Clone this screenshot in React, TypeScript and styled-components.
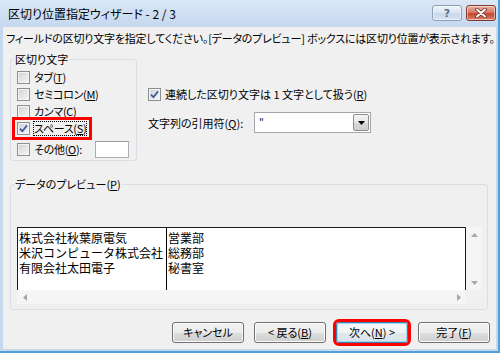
import { FunctionComponent, ReactNode } from 'react';
import styled, { createGlobalStyle } from 'styled-components';

const GlobalStyle = createGlobalStyle`
    html, body {
        margin: 0;
        padding: 0;
        background: #ffffff;
    }
`;

const uiFont = `"Noto Sans CJK JP", "Noto Sans", sans-serif`;

const Window = styled.div`
    width: 500px;
    height: 353px;
    box-sizing: border-box;
    display: flex;
    flex-direction: column;
    background: linear-gradient(#dae7f6, #c5d8ee 27px, #c5d8ee);
    border-right: 2px solid #4fa1da;
    border-bottom: 2px solid #4fa1da;
    font-family: ${uiFont};
    font-size: 11px;
    font-feature-settings: "palt";
    color: #000;
    overflow: hidden;
`;

const TitleBar = styled.div`
    height: 27px;
    flex: none;
    display: flex;
    align-items: flex-start;
    padding-left: 8px;
`;

const Title = styled.div`
    flex: 1;
    line-height: 27px;
    font-size: 12px;
    white-space: nowrap;
`;

const CaptionButtons = styled.div`
    display: flex;
    gap: 4px;
    margin: 5px 2px 0 0;
`;

const CaptionButton = styled.div<{ $close?: boolean }>`
    width: 30px;
    height: 16px;
    box-sizing: border-box;
    border-radius: 3px;
    display: flex;
    align-items: center;
    justify-content: center;
    border: 1px solid ${p => (p.$close ? '#80392c' : '#8aa0ba')};
    background: ${p =>
        p.$close
            ? 'linear-gradient(#eab0a2, #d67b69 45%, #c5452f 55%, #d9826e)'
            : 'linear-gradient(#eef3fa, #dbe6f3 45%, #c9d8ea 55%, #d6e3f1)'};
    box-shadow: inset 0 0 0 1px rgba(255, 255, 255, 0.5);
    color: #5d6f86;
    font-family: "DejaVu Sans", sans-serif;
    font-weight: bold;
    font-size: 11px;
`;

const Client = styled.div`
    flex: 1;
    margin: 0 2px 2px 3px;
    background: #f0f0f0;
    display: flex;
    flex-direction: column;
`;

const Instruction = styled.div`
    margin: 4px 0 0 3px;
    line-height: 14px;
    white-space: nowrap;
    letter-spacing: -0.2px;
`;

const TopRow = styled.div`
    display: flex;
    margin: 7px 0 0 7px;
`;

const Group = styled.fieldset<{ $width?: number }>`
    margin: 0;
    padding: 0;
    min-width: 0;
    border: 1px solid #d5dfe5;
    border-radius: 3px;
    ${p => (p.$width ? `width: ${p.$width}px;` : '')}
    box-sizing: border-box;
`;

const Legend = styled.legend`
    margin-left: 3px;
    padding: 0 1px;
    line-height: 14px;
    white-space: nowrap;
`;

const DelimiterList = styled.div`
    display: flex;
    flex-direction: column;
    padding: 3px 7px 2px 6px;
    letter-spacing: -0.3px;
`;

const Row = styled.div<{ $highlight?: boolean; $gapTop?: number }>`
    display: flex;
    align-items: center;
    height: 17px;
    white-space: nowrap;
    margin-top: ${p => p.$gapTop ?? 0}px;
    ${p =>
        p.$highlight
            ? `
        width: fit-content;
        margin-left: -2px;
        padding: 0 2px;
        outline: 3px solid #ff0000;
    `
            : ''}
`;

const Box = styled.span`
    width: 13px;
    height: 13px;
    box-sizing: border-box;
    flex: none;
    border: 1px solid #8e8f8f;
    background: linear-gradient(135deg, #cdd1d6, #f7f7f7);
    box-shadow: inset 0 0 0 1px #f4f4f4;
    display: flex;
    align-items: center;
    justify-content: center;
`;

const Label = styled.span<{ $focus?: boolean }>`
    margin-left: 3px;
    line-height: 15px;
    padding: 0 1px;
    ${p => (p.$focus ? 'outline: 1px dotted #000; outline-offset: -1px;' : '')}
`;

const TextBox = styled.div`
    width: 34px;
    height: 17px;
    box-sizing: border-box;
    margin-left: auto;
    background: #fff;
    border: 1px solid #abadb3;
    border-top-color: #9a9ca3;
`;

const RightColumn = styled.div`
    display: flex;
    flex-direction: column;
    margin-left: 11px;
    padding-top: 34px;
`;

const QuoteRow = styled.div`
    display: flex;
    align-items: center;
    margin-top: 9px;
    height: 21px;
`;

const QuoteLabel = styled.span`
    width: 106px;
    white-space: nowrap;
`;

const Combo = styled.div`
    width: 117px;
    height: 21px;
    box-sizing: border-box;
    border: 1px solid #a4a6ab;
    background: #fff;
    display: flex;
    align-items: stretch;
`;

const ComboValue = styled.span`
    flex: 1;
    padding-left: 4px;
    line-height: 17px;
    font-size: 10px;
`;

const DropButton = styled.span`
    width: 16px;
    margin: 1px;
    box-sizing: border-box;
    border: 1px solid #8e8f8f;
    border-radius: 2px;
    background: linear-gradient(#f6f6f6, #e6e6e6 50%, #d6d6d6 51%, #cfcfcf);
    display: flex;
    align-items: center;
    justify-content: center;
`;

const PreviewGroup = styled(Group)`
    margin: 16px 8px 0 7px;
`;

const PreviewBody = styled.div`
    padding: 36px 5px 5px 6px;
`;

const PreviewGrid = styled.div`
    display: grid;
    grid-template-columns: 1fr 16px;
    grid-template-rows: 63px 14px;
`;

const PreviewList = styled.div`
    background: #fff;
    border: 1px solid #1a1a1a;
    border-bottom: none;
    display: flex;
    font-size: 12px;
    font-feature-settings: normal;
    overflow: hidden;
`;

const PreviewColumn = styled.div<{ $width?: number; $divider?: boolean }>`
    ${p => (p.$width ? `width: ${p.$width}px; flex: none;` : 'flex: 1;')}
    ${p => (p.$divider ? 'border-right: 1px solid #000;' : '')}
    padding: 2px 0 0 1px;
    line-height: 15px;
    white-space: nowrap;
`;

const ScrollBar = styled.div<{ $vertical?: boolean }>`
    background: #f5f5f5;
    display: flex;
    flex-direction: ${p => (p.$vertical ? 'column' : 'row')};
    align-items: center;
    justify-content: space-between;
    padding: ${p => (p.$vertical ? '6px 0 5px' : '0 5px 0 6px')};
`;

const ButtonRow = styled.div`
    display: flex;
    justify-content: flex-end;
    gap: 10px;
    margin-top: 12px;
    padding-right: 6px;
`;

const Button = styled.div<{ $default?: boolean; $highlight?: boolean }>`
    width: 72px;
    height: 21px;
    box-sizing: border-box;
    border-radius: 3px;
    border: 1px solid ${p => (p.$default ? '#3c7fb1' : '#707070')};
    background: ${p =>
        p.$default
            ? 'linear-gradient(#f6f9fb, #eef3f6 50%, #e2e9ee 51%, #d8e2e8)'
            : 'linear-gradient(#f2f2f2, #ebebeb 50%, #dddddd 51%, #cfcfcf)'};
    box-shadow: inset 0 0 0 1px ${p => (p.$default ? '#9ed8f6' : '#fcfcfc')};
    display: flex;
    align-items: center;
    justify-content: center;
    white-space: nowrap;
    line-height: 15px;
    ${p => (p.$highlight ? 'outline: 3px solid #ff0000;' : '')}
`;

const Check: FunctionComponent = () => (
    <svg width="9" height="9" viewBox="0 0 9 9">
        <path d="M1 4.6 L3.4 7.2 L8 1.4" fill="none" stroke="#3b5a9e" strokeWidth="1.7" />
    </svg>
);

const Arrow: FunctionComponent<{ dir: 'up' | 'down' | 'left' | 'right'; color?: string }> = ({ dir, color = '#a7a7a7' }) => {
    const paths = {
        up: 'M0 4 L3.5 0 L7 4 Z',
        down: 'M0 0 L7 0 L3.5 4 Z',
        left: 'M4 0 L4 7 L0 3.5 Z',
        right: 'M0 0 L4 3.5 L0 7 Z',
    };
    const vertical = dir === 'up' || dir === 'down';
    return (
        <svg width={vertical ? 7 : 4} height={vertical ? 4 : 7} viewBox={vertical ? '0 0 7 4' : '0 0 4 7'}>
            <path d={paths[dir]} fill={color} />
        </svg>
    );
};

const CheckItem: FunctionComponent<{ checked?: boolean; focus?: boolean; highlight?: boolean; gapTop?: number; children: ReactNode; extra?: ReactNode }> = ({ checked, focus, highlight, gapTop, children, extra }) => (
    <Row $highlight={highlight} $gapTop={gapTop}>
        <Box>{checked && <Check />}</Box>
        <Label $focus={focus}>{children}</Label>
        {extra}
    </Row>
);

const App: FunctionComponent = () => {
    return (
        <>
            <GlobalStyle />
            <Window>
                <TitleBar>
                    <Title>区切り位置指定ウィザード - 2 / 3</Title>
                    <CaptionButtons>
                        <CaptionButton>?</CaptionButton>
                        <CaptionButton $close>
                            <svg width="12" height="10" viewBox="0 0 12 10">
                                <path d="M2 1.5 L10 8.5 M10 1.5 L2 8.5" stroke="#6a2a20" strokeWidth="3.6" strokeLinecap="round" />
                                <path d="M2 1.5 L10 8.5 M10 1.5 L2 8.5" stroke="#ffffff" strokeWidth="2" strokeLinecap="round" />
                            </svg>
                        </CaptionButton>
                    </CaptionButtons>
                </TitleBar>
                <Client>
                    <Instruction>
                        フィールドの区切り文字を指定してください。[データのプレビュー] ボックスには区切り位置が表示されます。
                    </Instruction>
                    <TopRow>
                        <Group $width={127}>
                            <Legend>区切り文字</Legend>
                            <DelimiterList>
                                <CheckItem>タブ(<u>T</u>)</CheckItem>
                                <CheckItem>セミコロン(<u>M</u>)</CheckItem>
                                <CheckItem>カンマ(<u>C</u>)</CheckItem>
                                <CheckItem checked focus highlight>スペース(<u>S</u>)</CheckItem>
                                <CheckItem gapTop={4} extra={<TextBox />}>その他(<u>O</u>):</CheckItem>
                            </DelimiterList>
                        </Group>
                        <RightColumn>
                            <CheckItem checked>連続した区切り文字は 1 文字として扱う(<u>R</u>)</CheckItem>
                            <QuoteRow>
                                <QuoteLabel>文字列の引用符(<u>Q</u>):</QuoteLabel>
                                <Combo>
                                    <ComboValue>"</ComboValue>
                                    <DropButton>
                                        <Arrow dir="down" color="#000" />
                                    </DropButton>
                                </Combo>
                            </QuoteRow>
                        </RightColumn>
                    </TopRow>
                    <PreviewGroup>
                        <Legend>データのプレビュー(<u>P</u>)</Legend>
                        <PreviewBody>
                            <PreviewGrid>
                                <PreviewList>
                                    <PreviewColumn $width={147} $divider>
                                        <div>株式会社秋葉原電気</div>
                                        <div>米沢コンピュータ株式会社</div>
                                        <div>有限会社太田電子</div>
                                    </PreviewColumn>
                                    <PreviewColumn>
                                        <div>営業部</div>
                                        <div>総務部</div>
                                        <div>秘書室</div>
                                    </PreviewColumn>
                                </PreviewList>
                                <ScrollBar $vertical>
                                    <Arrow dir="up" />
                                    <Arrow dir="down" />
                                </ScrollBar>
                                <ScrollBar>
                                    <Arrow dir="left" />
                                    <Arrow dir="right" />
                                </ScrollBar>
                                <div />
                            </PreviewGrid>
                        </PreviewBody>
                    </PreviewGroup>
                    <ButtonRow>
                        <Button>キャンセル</Button>
                        <Button>&lt; 戻る(<u>B</u>)</Button>
                        <Button $default $highlight>次へ(<u>N</u>) &gt;</Button>
                        <Button>完了(<u>F</u>)</Button>
                    </ButtonRow>
                </Client>
            </Window>
        </>
    );
};

export default App;
